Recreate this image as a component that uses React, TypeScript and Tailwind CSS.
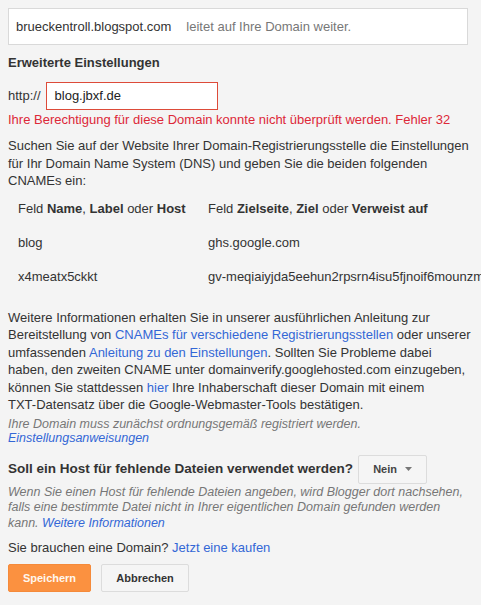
import React from 'react';

/**
 * Blogger "Erweiterte Einstellungen" panel for a custom domain.
 */
export default function App() {
  const rows = [
    { host: 'blog', target: 'ghs.google.com' },
    { host: 'x4meatx5ckkt', target: 'gv-meqiaiyjda5eehun2rpsrn4isu5fjnoif6mounzm3xqbwyqtdq.domainverify.googlehosted.com' },
  ];

  return (
    <div className="w-[481px] h-[605px] overflow-hidden bg-[#f4f4f4] font-['Liberation_Sans',Arial,sans-serif] text-[13px] leading-[16px] text-[#222]">
      <div className="pl-2 pt-2 w-[476px]">
        {/* Redirect notice */}
        <div className="w-[460px] h-[37px] bg-white border border-[#d9d9d9] flex items-center pl-[7px] gap-[15px] whitespace-nowrap">
          <span className="text-[#333]">brueckentroll.blogspot.com</span>
          <span className="text-[#777]">leitet auf Ihre Domain weiter.</span>
        </div>

        <h3 className="mt-[10px] font-bold text-[#333]">Erweiterte Einstellungen</h3>

        <div className="mt-[11px] flex items-center gap-[5px]">
          <span className="text-[#333]">http://</span>
          <div className="w-[172px] h-[28px] bg-white border border-[#dd4b39] flex items-center pl-[8px] text-[#222]">
            blog.jbxf.de
          </div>
        </div>

        <p className="mt-[2px] text-[#dd2838] whitespace-nowrap">
          Ihre Berechtigung für diese Domain konnte nicht überprüft werden. Fehler 32
        </p>

        <p className="mt-[9px] w-[466px] leading-[17.5px] text-[#333]">
          Suchen Sie auf der Website Ihrer Domain-Registrierungsstelle die Einstellungen für Ihr Domain Name System (DNS) und geben Sie die beiden folgenden CNAMEs ein:
        </p>

        {/* CNAME table */}
        <div className="mt-[2px] pl-[10px] text-[#333]">
          <div className="h-[34px] flex items-center whitespace-nowrap">
            <span className="w-[190px] shrink-0">
              Feld <b>Name</b>, <b>Label</b> oder <b>Host</b>
            </span>
            <span>
              Feld <b>Zielseite</b>, <b>Ziel</b> oder <b>Verweist auf</b>
            </span>
          </div>
          {rows.map((row) => (
            <div key={row.host} className="h-[34px] flex items-center whitespace-nowrap">
              <span className="w-[190px] shrink-0">{row.host}</span>
              <span>{row.target}</span>
            </div>
          ))}
        </div>

        <p className="mt-[15px] w-[466px] leading-[17.5px] text-[#333]">
          Weitere Informationen erhalten Sie in unserer ausführlichen Anleitung zur Bereitstellung von{' '}
          <a className="text-[#3367d6]">CNAMEs für verschiedene Registrierungsstellen</a> oder unserer umfassenden{' '}
          <a className="text-[#3367d6]">Anleitung zu den Einstellungen</a>. Sollten Sie Probleme dabei haben, den zweiten CNAME unter domainverify.googlehosted.com einzugeben, können Sie stattdessen{' '}
          <a className="text-[#3367d6]">hier</a> Ihre Inhaberschaft dieser Domain mit einem{' '}
          <span className="whitespace-nowrap">TXT-Datensatz</span> über die Google-Webmaster-Tools bestätigen.
        </p>

        <p className="mt-[3px] italic text-[12.5px] leading-[14px] text-[#777]">
          Ihre Domain muss zunächst ordnungsgemäß registriert werden.
          <br />
          <a className="text-[#3367d6]">Einstellungsanweisungen</a>
        </p>

        <div className="mt-[10px] flex items-center gap-[5px]">
          <span className="font-bold text-[13.5px] text-[#333]">Soll ein Host für fehlende Dateien verwendet werden?</span>
          <button className="w-[69px] h-[29px] bg-[#f5f5f5] border border-[#dcdcdc] rounded-[2px] flex items-center justify-center gap-[8px] text-[11px] font-bold text-[#444]">
            Nein
            <svg width="7" height="4" viewBox="0 0 7 4">
              <path d="M0 0h7L3.5 4z" fill="#777" />
            </svg>
          </button>
        </div>

        <p className="mt-[1px] w-[462px] italic text-[12.5px] leading-[15.5px] text-[#777]">
          Wenn Sie einen Host für fehlende Dateien angeben, wird Blogger dort nachsehen, falls eine bestimmte Datei nicht in Ihrer eigentlichen Domain gefunden werden kann.{' '}
          <a className="text-[#3367d6]">Weitere Informationen</a>
        </p>

        <p className="mt-[9px] text-[#333]">
          Sie brauchen eine Domain? <a className="text-[#3367d6]">Jetzt eine kaufen</a>
        </p>

        <div className="mt-[8px] flex gap-[10px]">
          <button className="w-[83px] h-[28px] rounded-[2px] bg-[#fb9140] border border-[#f58a3a] text-[#fff7ee] text-[11px] font-bold">
            Speichern
          </button>
          <button className="w-[88px] h-[28px] rounded-[2px] bg-[#f5f5f5] border border-[#dcdcdc] text-[#333] text-[11px] font-bold">
            Abbrechen
          </button>
        </div>
      </div>
    </div>
  );
}
